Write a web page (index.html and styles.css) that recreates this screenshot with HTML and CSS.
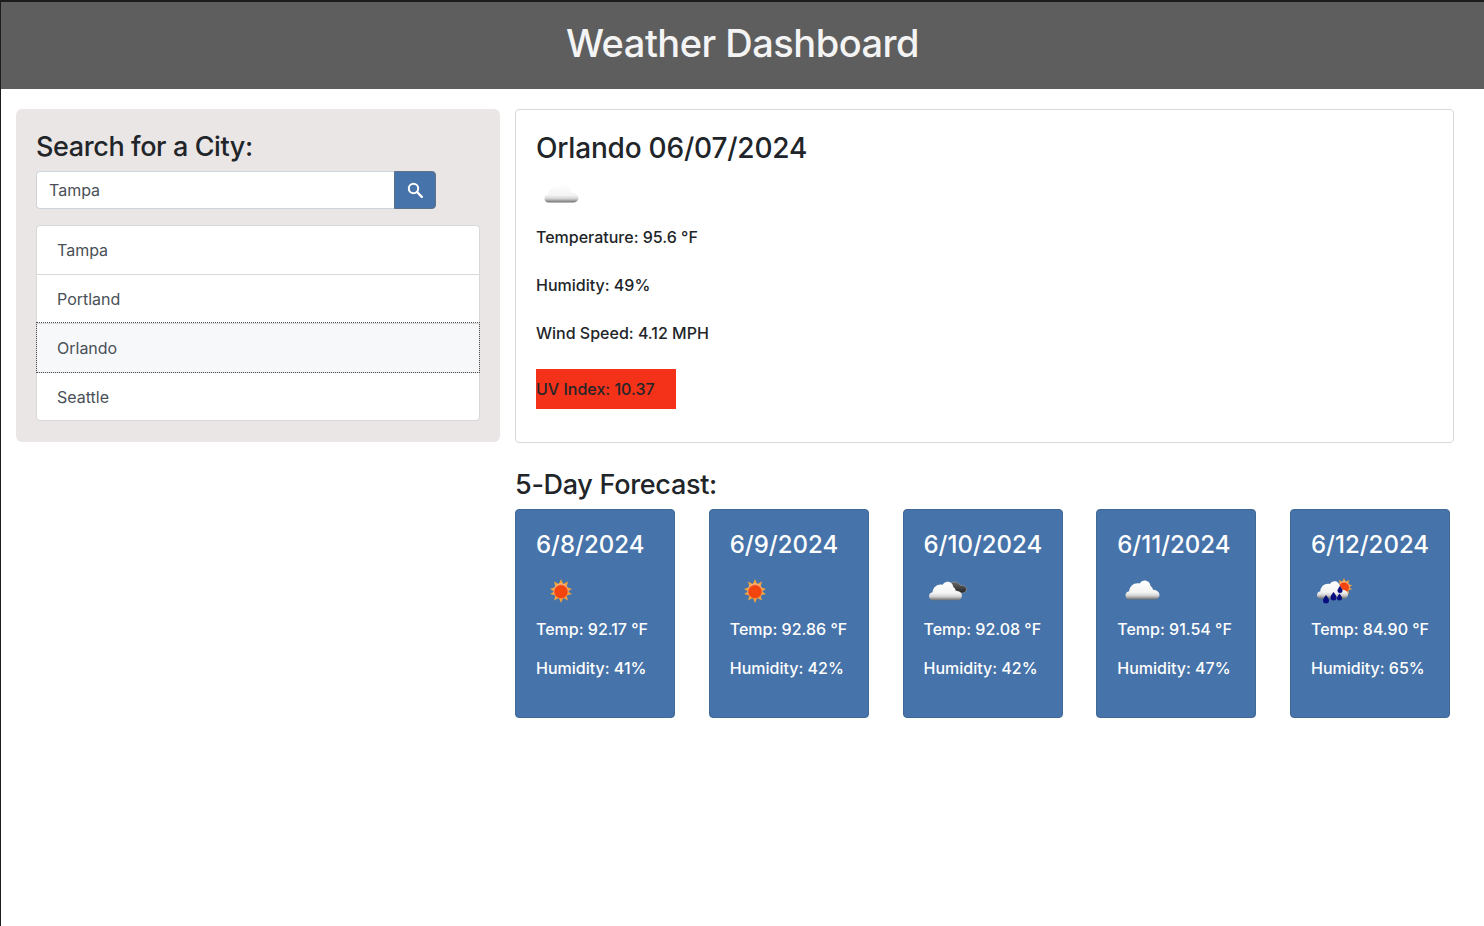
FILE: index.html
```html
<!DOCTYPE html>
<html lang="en">
<head>
  <meta charset="UTF-8" />
  <title>Weather Dashboard</title>
  <link rel="stylesheet" href="styles.css">
</head>
<body>
  <svg class="icon-defs" width="0" height="0" aria-hidden="true">
    <defs>
      <linearGradient id="cloudFill" x1="0" y1="0" x2="0" y2="1">
        <stop offset="0" stop-color="#ffffff" />
        <stop offset="0.62" stop-color="#f4f4f4" />
        <stop offset="0.8" stop-color="#d2d2d2" />
        <stop offset="1" stop-color="#6f6f6f" />
      </linearGradient>
      <linearGradient id="darkFill" x1="0" y1="0" x2="0" y2="1">
        <stop offset="0" stop-color="#6a6a6a" />
        <stop offset="1" stop-color="#232323" />
      </linearGradient>
      <radialGradient id="sunFill" cx="0.5" cy="0.55" r="0.55">
        <stop offset="0" stop-color="#f4460f" />
        <stop offset="0.7" stop-color="#f2430e" />
        <stop offset="1" stop-color="#fbd9a8" />
      </radialGradient>
      <symbol id="sun-shape" viewBox="0 0 24 24">
        <path fill="#f2a23a" d="M12 0l2.2 5 4.8-2.4-1.4 5.3L23 10l-4.2 2.4L23 15l-5.4 1.4 1.4 5-4.8-2.3L12 24l-2.2-4.9-4.8 2.3 1.4-5L1 15l4.2-2.6L1 10l5.4-2.1L5 2.6 9.8 5z" />
        <circle cx="12" cy="12" r="7.6" fill="url(#sunFill)" />
      </symbol>
      <symbol id="cloud-shape" viewBox="0 0 34 20">
        <path fill="url(#cloudFill)" d="M4 19.5C1.6 19.5 0 17.6 0 15.4c0-2.2 1.5-3.8 3.6-4.1C4 6.6 7.700 3.200 12 3.200c.8 0 1.500.1 2.200.3C15.400 1.400 17.300.5 19 .5c3.300 0 5.700 2.300 6 5.500 1.500.9 2.300 2.300 2.500 3.800 3.300.1 6.500 2 6.500 5 0 2.700-2 4.700-4.600 4.700z" />
      </symbol>
    </defs>
  </svg>

  <header class="page-header">
    <h1>Weather Dashboard</h1>
  </header>

  <div class="content">
    <aside class="search-panel">
      <h3>Search for a City:</h3>
      <form class="search-form">
        <input class="search-input" type="text" value="Tampa" />
        <button class="search-btn" type="button" aria-label="Search">
          <svg width="16" height="16" viewBox="0 0 16 16">
            <circle cx="6.5" cy="6.500" r="4.700" fill="none" stroke="#fff" stroke-width="2" />
            <path d="M10 10l4.800 4.800" stroke="#fff" stroke-width="2.400" stroke-linecap="round" />
          </svg>
        </button>
      </form>
      <ul class="city-list">
        <li class="city-item">Tampa</li>
        <li class="city-item">Portland</li>
        <li class="city-item city-active">Orlando</li>
        <li class="city-item">Seattle</li>
      </ul>
    </aside>

    <main class="weather">
      <section class="current-card">
        <h2>Orlando 06/07/2024</h2>
        <svg class="wx-icon" width="50" height="50" viewBox="0 0 50 50">
          <use href="#cloud-shape" x="8" y="14" width="35" height="20" />
        </svg>
        <p>Temperature: 95.6 °F</p>
        <p>Humidity: 49%</p>
        <p>Wind Speed: 4.12 MPH</p>
        <p class="uv-index">UV Index: 10.37</p>
      </section>

      <h3 class="forecast-title">5-Day Forecast:</h3>
      <div class="forecast-row">
        <div class="forecast-card">
          <h4>6/8/2024</h4>
          <svg class="wx-icon" width="50" height="50" viewBox="0 0 50 50">
            <use href="#sun-shape" x="13" y="13" width="24" height="24" />
          </svg>
          <p>Temp: 92.17 °F</p>
          <p>Humidity: 41%</p>
        </div>
        <div class="forecast-card">
          <h4>6/9/2024</h4>
          <svg class="wx-icon" width="50" height="50" viewBox="0 0 50 50">
            <use href="#sun-shape" x="13" y="13" width="24" height="24" />
          </svg>
          <p>Temp: 92.86 °F</p>
          <p>Humidity: 42%</p>
        </div>
        <div class="forecast-card">
          <h4>6/10/2024</h4>
          <svg class="wx-icon" width="50" height="50" viewBox="0 0 50 50">
            <path fill="url(#darkFill)" stroke="#9a9a9a" stroke-width="0.6" d="M24 23c0-4 2.500-7 6.500-7 2.500 0 4.500 1.200 5.500 3.200 3-.4 6.500 1.300 6.500 4 0 2.300-2 3.800-4.500 3.800H28z" />
            <use href="#cloud-shape" x="5" y="15" width="33" height="20" />
          </svg>
          <p>Temp: 92.08 °F</p>
          <p>Humidity: 42%</p>
        </div>
        <div class="forecast-card">
          <h4>6/11/2024</h4>
          <svg class="wx-icon" width="50" height="50" viewBox="0 0 50 50">
            <use href="#cloud-shape" x="8" y="14" width="35" height="20" />
          </svg>
          <p>Temp: 91.54 °F</p>
          <p>Humidity: 47%</p>
        </div>
        <div class="forecast-card">
          <h4>6/12/2024</h4>
          <svg class="wx-icon" width="50" height="50" viewBox="0 0 50 50">
            <use href="#sun-shape" x="24" y="12" width="18" height="18" />
            <use href="#cloud-shape" x="6" y="14" width="31" height="20" />
            <g fill="#0a0f80">
              <path d="M15 29c2 2.600 3 4 3 5.400a3 3 0 0 1-6 0c0-1.400 1-2.800 3-5.400z" />
              <path d="M22.500 26c2 2.600 3 4 3 5.400a3 3 0 0 1-6 0c0-1.400 1-2.800 3-5.400z" />
              <path d="M29 20c1.700 2.200 2.500 3.400 2.500 4.600a2.500 2.500 0 0 1-5 0c0-1.200.8-2.400 2.500-4.600z" />
              <path d="M28.500 27.500c1.700 2.200 2.500 3.400 2.500 4.600a2.500 2.500 0 0 1-5 0c0-1.200.8-2.400 2.500-4.600z" />
            </g>
          </svg>
          <p>Temp: 84.90 °F</p>
          <p>Humidity: 65%</p>
        </div>
      </div>
    </main>
  </div>
</body>
</html>
```
FILE: styles.css
```css
* {
  box-sizing: border-box;
}
html {
  background: #fff;
}
body {
  font-family: 'Inter', 'Liberation Sans', sans-serif;
  font-size: 16px;
  line-height: 24px;
  margin: 0;
  min-height: 926px;
  color: #212529;
  background: #fff;
  border-left: 1px solid #1c1c1e;
  border-top: 2px solid #1c1c1e;
}
.icon-defs {
  display: block;
  height: 0;
}
h1, h2, h3, h4, p, ul {
  margin: 0;
  padding: 0;
}
.page-header {
  height: 87px;
  background: #5e5e5e;
  color: #f4f4f4;
  text-align: center;
}
.page-header h1 {
  font-size: 38px;
  font-weight: 500;
  line-height: 82px;
  letter-spacing: -0.5px;
}
.content {
  display: flex;
  align-items: flex-start;
  padding: 20px 30px 0 15px;
}
.search-panel {
  flex: none;
  width: 484px;
  height: 333px;
  padding: 20px;
  background: #eae6e5;
  border-radius: 6px;
}
.search-panel h3 {
  font-size: 27px;
  font-weight: 500;
  line-height: 36px;
  letter-spacing: -0.4px;
  margin-bottom: 6px;
}
.search-form {
  display: flex;
  width: 400px;
  height: 38px;
}
.search-input {
  flex: 1;
  min-width: 0;
  padding: 6px 12px;
  font: inherit;
  color: #495057;
  background: #fff;
  border: 1px solid #ced4da;
  border-right: none;
  border-radius: 4px 0 0 4px;
}
.search-btn {
  display: flex;
  align-items: center;
  justify-content: center;
  width: 42px;
  padding: 0;
  background: #4673a9;
  border: 1px solid #5b7288;
  border-radius: 0 4px 4px 0;
}
.city-list {
  list-style: none;
  margin-top: 16px;
  width: 444px;
  background: #fff;
  border: 1px solid #d8d8d8;
  border-radius: 4px;
}
.city-item {
  height: 49px;
  padding: 12px 20px;
  color: #495057;
  border-top: 1px solid #d8d8d8;
}
.city-item:first-child {
  height: 48px;
  border-top: none;
}
.city-active {
  background: #f7f8fa;
  outline: 1px dotted #555;
}
.city-active + .city-item {
  height: 48px;
}
.weather {
  flex: none;
  width: 939px;
  margin-left: 15px;
}
.current-card {
  height: 334px;
  padding: 20px;
  background: #fff;
  border: 1px solid #d8d8d8;
  border-radius: 4px;
}
.current-card h2 {
  font-size: 28px;
  font-weight: 500;
  line-height: 36px;
  letter-spacing: -0.2px;
}
.current-card p {
  margin-bottom: 24px;
  font-weight: 450;
}
.wx-icon {
  display: block;
}
.current-card .wx-icon {
  margin-top: 3px;
  margin-bottom: 6px;
}
.current-card .uv-index {
  width: 140px;
  height: 40px;
  margin: 0;
  line-height: 40px;
  background: #f43219;
}
.forecast-title {
  font-size: 27px;
  font-weight: 500;
  line-height: 36px;
  letter-spacing: -0.3px;
  margin-top: 24px;
  margin-bottom: 6px;
}
.forecast-row {
  display: flex;
  justify-content: space-between;
  width: 935px;
}
.forecast-card {
  width: 160px;
  height: 209px;
  padding: 20px;
  color: #fff;
  background: #4673a9;
  border: 1px solid #3f6897;
  border-radius: 4px;
}
.forecast-card h4 {
  font-size: 24px;
  font-weight: 500;
  line-height: 29px;
}
.forecast-card .wx-icon {
  margin-top: 7px;
}
.forecast-card p {
  margin-top: 1px;
  margin-bottom: 15px;
  font-weight: 450;
}
```
